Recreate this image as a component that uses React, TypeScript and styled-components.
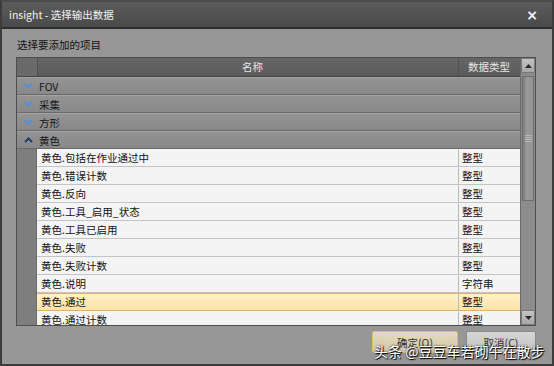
import styled, { createGlobalStyle } from "styled-components";

const GlobalStyle = createGlobalStyle`
  html, body { margin: 0; padding: 0; }
  body {
    font-family: "Noto Sans CJK SC", "Liberation Sans", sans-serif;
    font-size: 10.5px;
  }
`;

const Window = styled.div`
  position: relative;
  box-sizing: border-box;
  width: 554px;
  height: 366px;
  border: 2px solid #3c3c3c;
  border-top-color: #4a4a4a;
  background: #979797;
  display: flex;
  flex-direction: column;
  overflow: hidden;
`;

const TitleBar = styled.div`
  height: 25px;
  flex-shrink: 0;
  display: flex;
  align-items: center;
  justify-content: space-between;
  padding: 0 14px 0 7px;
  background: linear-gradient(#5c5c5c, #4a4a4a);
  border-bottom: 2px solid #2e2e2e;
  color: #f2f2f2;
  font-size: 10.5px;
`;

const Close = styled.span`
  font-family: "DejaVu Sans", sans-serif;
  font-weight: bold;
  font-size: 14px;
  color: #f4f4f4;
`;

const Body = styled.div`
  flex: 1;
  display: flex;
  flex-direction: column;
  padding: 7px 16px 0 14px;
`;

const Label = styled.div`
  height: 18px;
  line-height: 18px;
  color: #111;
  padding-left: 1px;
`;

const Table = styled.div`
  margin-top: 3px;
  height: 269px;
  box-sizing: border-box;
  border: 1px solid #4e4e4e;
  display: grid;
  grid-template-columns: 1fr 15px;
  overflow: hidden;
`;

const List = styled.div`
  display: flex;
  flex-direction: column;
  overflow: hidden;
`;

const Header = styled.div`
  height: 18px;
  flex-shrink: 0;
  display: grid;
  grid-template-columns: 20px 1fr 62px;
  background: linear-gradient(#666, #5a5a5a);
  border-bottom: 1px solid #444;
  color: #e6e6e6;
  line-height: 18px;
`;

const HeadCell = styled.div<{ $center?: boolean }>`
  text-align: ${(p) => (p.$center ? "center" : "left")};
  border-left: 1px solid #505050;
  padding-left: 9px;
  &:first-child { border-left: none; background: #6a6a6a; }
`;

const GroupRow = styled.div`
  height: 18px;
  flex-shrink: 0;
  box-sizing: border-box;
  display: flex;
  align-items: center;
  background: linear-gradient(#939393, #888);
  border-top: 1px solid #a3a3a3;
  border-bottom: 1px solid #6a6a6a;
  color: #151515;
`;

const Chevron = styled.span`
  width: 22px;
  display: flex;
  justify-content: center;
`;

const DataRow = styled.div`
  height: 18px;
  flex-shrink: 0;
  display: grid;
  grid-template-columns: 20px 1fr 62px;
  color: #111;
  line-height: 16px;
`;

const Indent = styled.div`
  background: #7e7e7e;
  border-right: 1px solid #6c6c6c;
`;

const Cell = styled.div<{ $selected?: boolean; $type?: boolean }>`
  box-sizing: border-box;
  padding-left: ${(p) => (p.$type ? "3px" : "4px")};
  background: ${(p) => (p.$selected ? "linear-gradient(#fff1c8, #fde3a6)" : "#f4f4f4")};
  border-bottom: 1px solid ${(p) => (p.$selected ? "#e2b06c" : "#c4c4c4")};
  border-top: 1px solid ${(p) => (p.$selected ? "#e2b06c" : "transparent")};
  border-left: ${(p) => (p.$type ? "1px solid #b8b8b8" : "none")};
  white-space: nowrap;
  overflow: hidden;
`;

const Scrollbar = styled.div`
  display: flex;
  flex-direction: column;
  background: #8c8c8c;
  border-left: 1px solid #6a6a6a;
`;

const ScrollButton = styled.div`
  height: 15px;
  flex-shrink: 0;
  display: flex;
  align-items: center;
  justify-content: center;
  background: linear-gradient(#c4c4c4, #a8a8a8);
  border: 1px solid #7a7a7a;
  box-sizing: border-box;
`;

const Track = styled.div`
  flex: 1;
  display: flex;
  flex-direction: column;
  padding: 3px 0;
`;

const Thumb = styled.div`
  height: 125px;
  box-sizing: border-box;
  margin: 0 1px;
  background: linear-gradient(90deg, #7a7a7a, #9a9a9a 40%, #939393);
  border: 1px solid #6e6e6e;
  display: flex;
  align-items: center;
  justify-content: center;
`;

const Grip = styled.div`
  width: 7px;
  height: 7px;
  background: repeating-linear-gradient(#b8b8b8 0 1px, transparent 1px 2px);
`;

const Footer = styled.div`
  height: 40px;
  display: flex;
  justify-content: flex-end;
  align-items: flex-start;
  gap: 8px;
  padding-top: 5px;
  box-sizing: border-box;
`;

const Button = styled.div<{ $primary?: boolean }>`
  width: ${(p) => (p.$primary ? "86px" : "70px")};
  height: 22px;
  box-sizing: border-box;
  display: flex;
  align-items: center;
  justify-content: center;
  color: #333;
  background: ${(p) => (p.$primary ? "linear-gradient(#e4dcc0, #cfc6a4)" : "linear-gradient(#d6d6d6, #c2c2c2)")};
  border: 1px solid ${(p) => (p.$primary ? "#d8c070" : "#8a8a8a")};
  border-radius: 2px;
`;

const Watermark = styled.div`
  position: absolute;
  left: 372px;
  top: 339px;
  font-size: 14px;
  color: #fff;
  white-space: nowrap;
  text-shadow: 0 0 2px #000, 1px 1px 1px #000;
`;

const groups = ["FOV", "采集", "方形"];

const rows: [string, string][] = [
  ["黄色.包括在作业通过中", "整型"],
  ["黄色.错误计数", "整型"],
  ["黄色.反向", "整型"],
  ["黄色.工具_启用_状态", "整型"],
  ["黄色.工具已启用", "整型"],
  ["黄色.失败", "整型"],
  ["黄色.失败计数", "整型"],
  ["黄色.说明", "字符串"],
  ["黄色.通过", "整型"],
  ["黄色.通过计数", "整型"],
];

function ChevronIcon({ up }: { up?: boolean }) {
  return (
    <svg width="9" height="6" viewBox="0 0 9 6">
      <polyline
        points={up ? "1,5 4.5,1.5 8,5" : "1,1 4.5,4.5 8,1"}
        fill="none"
        stroke={up ? "#1f3f6a" : "#4b8fe6"}
        strokeWidth="2"
      />
    </svg>
  );
}

function Arrow({ down }: { down?: boolean }) {
  return (
    <svg width="7" height="4" viewBox="0 0 7 4">
      <polygon points={down ? "0,0 7,0 3.5,4" : "0,4 7,4 3.5,0"} fill="#2a2a2a" />
    </svg>
  );
}

export default function App() {
  return (
    <>
      <GlobalStyle />
      <Window>
        <TitleBar>
          <span>insight - 选择输出数据</span>
          <Close>×</Close>
        </TitleBar>
        <Body>
          <Label>选择要添加的项目</Label>
          <Table>
            <List>
              <Header>
                <HeadCell />
                <HeadCell $center>名称</HeadCell>
                <HeadCell>数据类型</HeadCell>
              </Header>
              {groups.map((g) => (
                <GroupRow key={g}>
                  <Chevron>
                    <ChevronIcon />
                  </Chevron>
                  {g}
                </GroupRow>
              ))}
              <GroupRow>
                <Chevron>
                  <ChevronIcon up />
                </Chevron>
                黄色
              </GroupRow>
              {rows.map(([name, type]) => {
                const sel = name === "黄色.通过";
                return (
                  <DataRow key={name}>
                    <Indent />
                    <Cell $selected={sel}>{name}</Cell>
                    <Cell $selected={sel} $type>
                      {type}
                    </Cell>
                  </DataRow>
                );
              })}
            </List>
            <Scrollbar>
              <ScrollButton>
                <Arrow />
              </ScrollButton>
              <Track>
                <Thumb>
                  <Grip />
                </Thumb>
              </Track>
              <ScrollButton>
                <Arrow down />
              </ScrollButton>
            </Scrollbar>
          </Table>
          <Footer>
            <Button $primary>确定(O)</Button>
            <Button>取消(C)</Button>
          </Footer>
        </Body>
        <Watermark>头条 @豆豆车若砌午在散步</Watermark>
      </Window>
    </>
  );
}
